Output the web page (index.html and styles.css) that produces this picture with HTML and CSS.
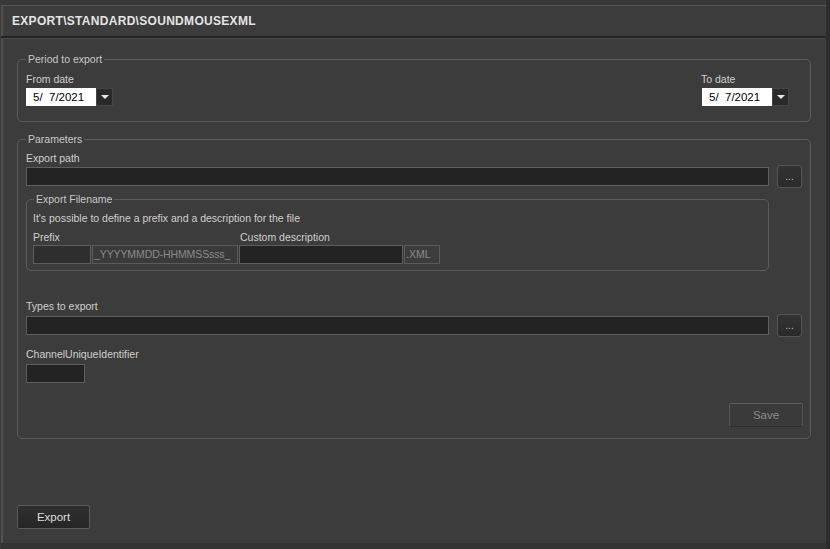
FILE: index.html
```html
<!DOCTYPE html>
<html lang="en">
<head>
    <meta charset="UTF-8">
    <title>Export\Standard\SoundMouseXml</title>
    <link rel="stylesheet" href="styles.css">
</head>
<body>
    <div class="window">
        <div class="topbar"></div>
        <div class="header">
            <h1 class="title">EXPORT\STANDARD\SOUNDMOUSEXML</h1>
        </div>

        <div class="content">
            <fieldset class="group period">
                <legend>Period to export</legend>
                <div class="date-row">
                    <div class="field">
                        <label class="lbl">From date</label>
                        <div class="date-picker">
                            <span class="date-value">5/&nbsp;&nbsp;7/2021</span>
                            <span class="drop"></span>
                        </div>
                    </div>
                    <div class="field">
                        <label class="lbl to">To date</label>
                        <div class="date-picker">
                            <span class="date-value">5/&nbsp;&nbsp;7/2021</span>
                            <span class="drop"></span>
                        </div>
                    </div>
                </div>
            </fieldset>

            <fieldset class="group params">
                <legend>Parameters</legend>

                <label class="lbl">Export path</label>
                <div class="path-row">
                    <div class="input wide"></div>
                    <button class="browse">...</button>
                </div>

                <fieldset class="group filename">
                    <legend>Export Filename</legend>
                    <p class="hint">It's possible to define a prefix and a description for the file</p>
                    <div class="name-row">
                        <div class="col">
                            <label class="lbl">Prefix</label>
                            <div class="input prefix"></div>
                        </div>
                        <div class="col">
                            <label class="lbl">&nbsp;</label>
                            <div class="fixed stamp">_YYYYMMDD-HHMMSSsss_</div>
                        </div>
                        <div class="col">
                            <label class="lbl desc">Custom description</label>
                            <div class="input custom"></div>
                        </div>
                        <div class="col">
                            <label class="lbl">&nbsp;</label>
                            <div class="fixed ext">.XML</div>
                        </div>
                    </div>
                </fieldset>

                <label class="lbl types">Types to export</label>
                <div class="path-row">
                    <div class="input wide"></div>
                    <button class="browse">...</button>
                </div>

                <label class="lbl channel">ChannelUniqueIdentifier</label>
                <div class="input channel-id"></div>

                <div class="save-row">
                    <button class="btn save" disabled>Save</button>
                </div>
            </fieldset>

            <button class="btn export">Export</button>
        </div>

        <div class="bottombar"></div>
    </div>
</body>
</html>
```

FILE: styles.css
```css
* {
    box-sizing: border-box;
}

body {
    margin: 0;
    background: #3c3c3c;
    font-family: "Liberation Sans", Arial, sans-serif;
    font-size: 10.5px;
    color: #cfcfcf;
}

.window {
    width: 830px;
    height: 549px;
    display: flex;
    flex-direction: column;
    border-left: 1px solid #3a3a3a;
    border-right: 4px solid #2c2c2c;
    box-shadow: inset 2px 0 0 #505050;
    overflow: hidden;
}

.topbar {
    height: 6px;
    background: #383838;
    border-bottom: 1px solid #555;
}

.header {
    height: 32px;
    padding-left: 11px;
    display: flex;
    align-items: center;
    border-bottom: 2px solid #242424;
    box-shadow: 0 1px 0 #4a4a4a;
}

.title {
    margin: 0;
    font-size: 12px;
    font-weight: bold;
    letter-spacing: 0.3px;
    color: #e4e4e4;
}

.content {
    flex: 1;
    display: flex;
    flex-direction: column;
    padding: 15px 15px 14px 16px;
}

/* group boxes */
.group {
    margin: 0;
    border: 1px solid #5a5a5a;
    border-radius: 5px;
    min-width: 0;
}

.group legend {
    padding: 0 2px;
    line-height: 13px;
    color: #c8c8c8;
}

.lbl {
    display: block;
    line-height: 13px;
    color: #cfcfcf;
}

.period {
    padding: 7px 21px 15px 8px;
}

.date-row {
    display: flex;
    justify-content: space-between;
}

.field .lbl {
    margin-bottom: 2px;
}

.lbl.to {
    margin-left: -1px;
}

.date-picker {
    display: flex;
    height: 18px;
}

.date-value {
    width: 70px;
    background: #fff;
    color: #000;
    font-size: 11.5px;
    line-height: 18px;
    padding-left: 7px;
}

.drop {
    width: 17px;
    background: #2a2a2a;
    border: 1px solid #454545;
    position: relative;
}

.drop::after {
    content: "";
    position: absolute;
    left: 4px;
    top: 6px;
    border-left: 4px solid transparent;
    border-right: 4px solid transparent;
    border-top: 4px solid #e8e8e8;
}

.params {
    margin-top: 11px;
    padding: 6px 8px 11px 8px;
}

.path-row {
    display: flex;
    align-items: center;
    gap: 8px;
    height: 23px;
}

.input {
    height: 19px;
    background: #232323;
    border: 1px solid #5e5e5e;
}

.input.wide {
    flex: 1;
}

.browse {
    flex: none;
    width: 25px;
    height: 23px;
    padding: 0;
    background: linear-gradient(#333, #2a2a2a);
    border: 1px solid #555;
    border-radius: 3px;
    color: #bdbdbd;
    font-family: "Liberation Sans", Arial, sans-serif;
    font-size: 10px;
    line-height: 18px;
}

.filename {
    margin: 5px 33px 0 0;
    padding: 6px 6px 6px 6px;
}

.filename legend {
    margin-left: 1px;
}

.hint {
    margin: 0 0 6px 0;
    line-height: 13px;
    color: #cfcfcf;
}

.name-row {
    display: flex;
    gap: 1px;
}

.col .lbl {
    margin-bottom: 1px;
}

.lbl.desc {
    padding-left: 1px;
}

.fixed {
    height: 19px;
    border: 1px solid #5a5a5a;
    background: #3a3a3a;
    color: #8a8a8a;
    line-height: 17px;
    padding-left: 1px;
    white-space: nowrap;
    overflow: hidden;
}

.prefix {
    width: 58px;
    background: #2e2e2e;
}

.stamp {
    width: 146px;
    letter-spacing: -0.1px;
}

.custom {
    width: 164px;
}

.ext {
    width: 36px;
    background: #3c3c3c;
}

.lbl.types {
    margin-top: 29px;
    margin-bottom: 1px;
}

.lbl.channel {
    margin-top: 11px;
    margin-bottom: 3px;
}

.channel-id {
    width: 59px;
}

.save-row {
    display: flex;
    justify-content: flex-end;
    margin: 20px -1px 0 0;
}

.btn {
    height: 24px;
    padding: 0;
    border: 1px solid #555;
    border-radius: 2px;
    font-family: "Liberation Sans", Arial, sans-serif;
    font-size: 11.5px;
}

.save {
    width: 74px;
    background: #3a3a3a;
    border-top-color: #5c5c5c;
    border-bottom-color: #2e2e2e;
    color: #8a8a8a;
}

.export {
    width: 73px;
    margin-top: auto;
    background: linear-gradient(#2f2f2f, #262626);
    border-color: #5a5a5a;
    color: #dedede;
}

.bottombar {
    height: 6px;
    background: #333;
}
```
